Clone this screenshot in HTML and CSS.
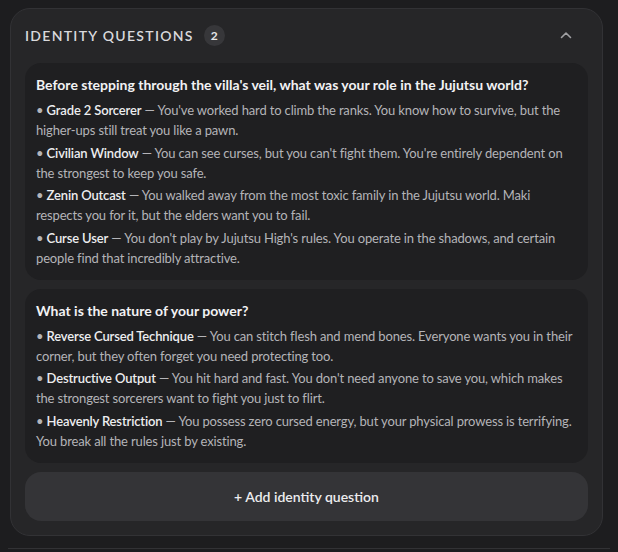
FILE: index.html
```html
<!DOCTYPE html>
<html>
<head>
<meta charset="utf-8">
<link rel="stylesheet" href="styles.css">
</head>
<body>
<section class="panel">
  <header class="panel-head">
    <div class="panel-title">
      <span class="title-text">Identity Questions</span>
      <span class="badge">2</span>
    </div>
    <svg class="chevron" width="12" height="8" viewBox="0 0 12 8"><path d="M1.5 6.5 L6 2 L10.5 6.5" fill="none" stroke="#a0a0a3" stroke-width="1.6" stroke-linecap="round" stroke-linejoin="round"/></svg>
  </header>
  <div class="list">
    <article class="qcard">
      <h3 class="q">Before stepping through the villa's veil, what was your role in the Jujutsu world?</h3>
      <p class="opt">• <b>Grade 2 Sorcerer</b> — You've worked hard to climb the ranks. You know how to survive, but the higher-ups still treat you like a pawn.</p>
      <p class="opt">• <b>Civilian Window</b> — You can see curses, but you can't fight them. You're entirely dependent on the strongest to keep you safe.</p>
      <p class="opt">• <b>Zenin Outcast</b> — You walked away from the most toxic family in the Jujutsu world. Maki respects you for it, but the elders want you to fail.</p>
      <p class="opt">• <b>Curse User</b> — You don't play by Jujutsu High's rules. You operate in the shadows, and certain people find that incredibly attractive.</p>
    </article>
    <article class="qcard">
      <h3 class="q">What is the nature of your power?</h3>
      <p class="opt">• <b>Reverse Cursed Technique</b> — You can stitch flesh and mend bones. Everyone wants you in their corner, but they often forget you need protecting too.</p>
      <p class="opt">• <b>Destructive Output</b> — You hit hard and fast. You don't need anyone to save you, which makes the strongest sorcerers want to fight you just to flirt.</p>
      <p class="opt">• <b>Heavenly Restriction</b> — You possess zero cursed energy, but your physical prowess is terrifying. You break all the rules just by existing.</p>
    </article>
    <button class="add">+ Add identity question</button>
  </div>
</section>
<div class="next"></div>
</body>
</html>
```
FILE: styles.css
```css
html, body {
  margin: 0;
  padding: 0;
  background: #1d1d1f;
}
body {
  padding: 8px 8px 0 10px;
  font-family: Lato, "Noto Sans", sans-serif;
  color: #b9b9bc;
}
.panel {
  width: 593px;
  box-sizing: border-box;
  background: #262628;
  border: 1px solid #323235;
  border-radius: 20px;
  padding: 14px 14px 14px 14px;
}
.panel-head {
  display: flex;
  align-items: center;
  justify-content: space-between;
  height: 24px;
  margin-bottom: 16px;
  padding-right: 16px;
}
.panel-title {
  display: flex;
  align-items: center;
  gap: 10px;
}
.title-text {
  text-transform: uppercase;
  letter-spacing: 1.3px;
  font-size: 14px;
  font-weight: 600;
  color: #d9d9dc;
}
.badge {
  width: 21px;
  height: 21px;
  border-radius: 50%;
  background: #37373a;
  color: #e6e6e8;
  font-size: 12px;
  font-weight: 700;
  display: flex;
  align-items: center;
  justify-content: center;
}
.list {
  display: flex;
  flex-direction: column;
  gap: 9px;
}
.qcard {
  background: #1f1f21;
  border-radius: 16px;
  padding: 12px 11px 12px 11px;
}
.q {
  margin: 0 0 5px 0;
  font-size: 14px;
  line-height: 20px;
  font-weight: 700;
  color: #f2f2f4;
}
.opt {
  margin: 0 0 2.5px 0;
  font-size: 13px;
  line-height: 20px;
  letter-spacing: -0.15px;
  color: #b4b4b8;
}
.opt:last-child { margin-bottom: 0; }
.opt b {
  font-weight: 600;
  color: #ededef;
}
.add {
  height: 49px;
  border: none;
  border-radius: 16px;
  background: #343437;
  color: #ececee;
  font-family: inherit;
  font-size: 14px;
  font-weight: 600;
}
.next {
  margin: 12px 0 0 -2px;
  border-top: 1px solid #323235;
  width: 602px;
}
```
